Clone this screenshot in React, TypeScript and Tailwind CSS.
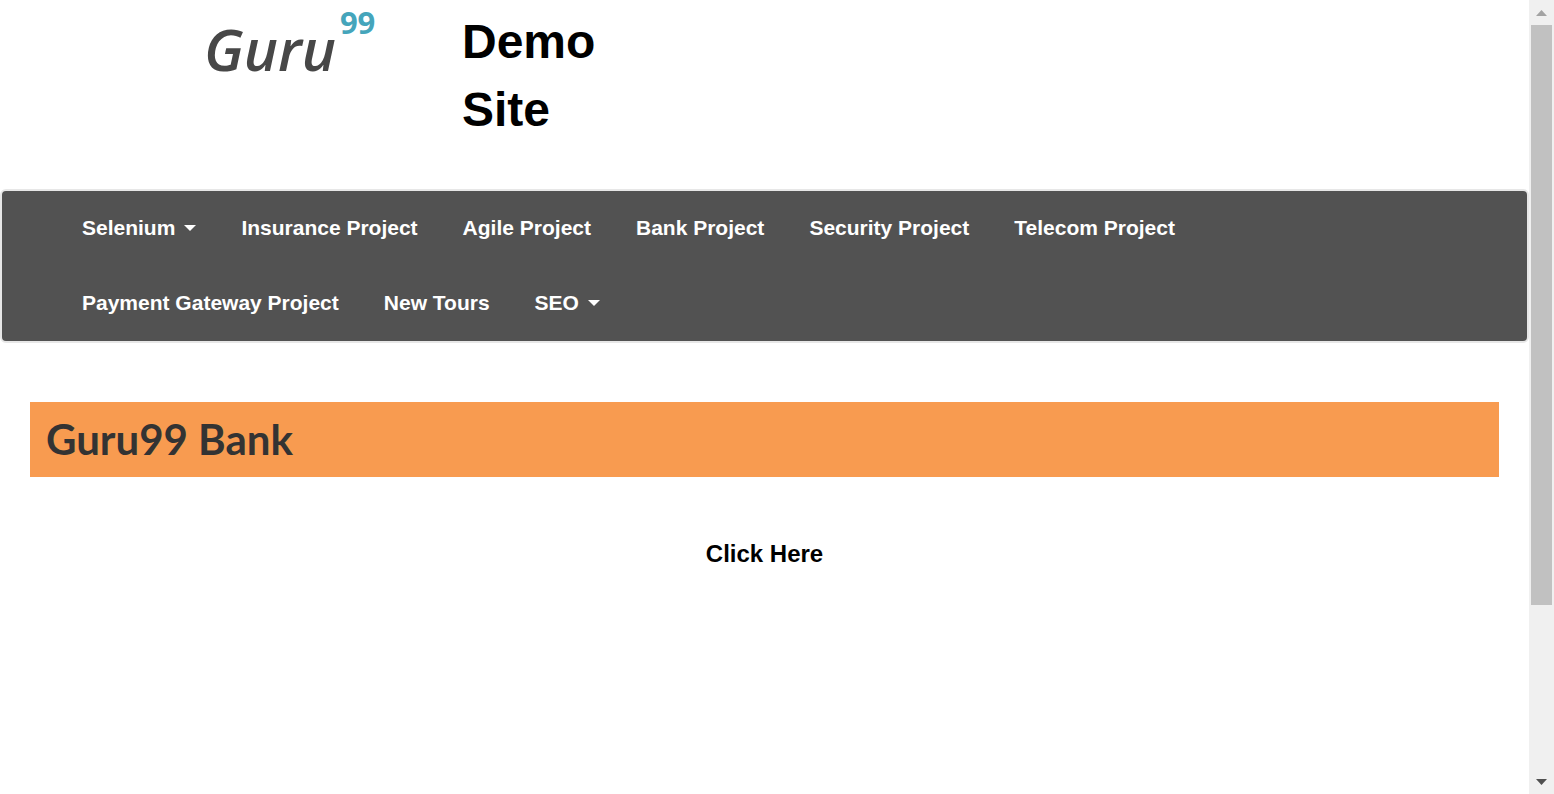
import React from "react";

const projects: { label: string; menu?: boolean }[] = [
  { label: "Selenium", menu: true },
  { label: "Insurance Project" },
  { label: "Agile Project" },
  { label: "Bank Project" },
  { label: "Security Project" },
  { label: "Telecom Project" },
  { label: "Payment Gateway Project" },
  { label: "New Tours" },
  { label: "SEO", menu: true },
];

function Caret() {
  return (
    <svg aria-hidden="true" width="12" height="6" viewBox="0 0 12 6" className="fill-white">
      <path d="M0 0H12L6 6Z" />
    </svg>
  );
}

function Logo() {
  return (
    <a href="#" className="flex w-[178px] items-start gap-1 font-['Open_Sans',sans-serif]">
      <span className="text-[58px] leading-[82px] font-semibold text-[#474747] italic">Guru</span>
      <span className="text-[31px] leading-[28px] font-bold text-[#45a5bb]">99</span>
    </a>
  );
}

function NavBar() {
  return (
    <nav className="rounded-md border-2 border-[#e7e7e7] bg-[#525252] pr-72 pl-20">
      <ul className="flex flex-wrap gap-x-[45px]">
        {projects.map(({ label, menu }) => (
          <li key={label} className="flex h-[75px] items-center pb-0.5">
            {menu ? (
              <button type="button" aria-haspopup="menu" className="flex items-center gap-[9px] text-[21px] leading-[30px] font-bold text-white">
                {label}
                <Caret />
              </button>
            ) : (
              <a href="#" className="text-[21px] leading-[30px] font-bold text-white">
                {label}
              </a>
            )}
          </li>
        ))}
      </ul>
    </nav>
  );
}

function ScrollRail() {
  return (
    <div aria-hidden="true" className="flex w-[25px] shrink-0 flex-col items-center bg-[#f0f0f0]">
      <div className="flex h-[25px] items-center">
        <svg width="11" height="6" viewBox="0 0 11 6" className="fill-[#a3a3a3]">
          <path d="M0 6L5.5 0L11 6Z" />
        </svg>
      </div>
      <div className="flex w-[21px] grow flex-col">
        <div className="h-[78%] bg-[#c1c1c1]" />
      </div>
      <div className="flex h-[25px] items-center">
        <svg width="11" height="6" viewBox="0 0 11 6" className="fill-[#505050]">
          <path d="M0 0H11L5.5 6Z" />
        </svg>
      </div>
    </div>
  );
}

export default function App() {
  return (
    <div className="flex min-h-screen bg-white font-['Liberation_Sans',Arial,sans-serif] text-black">
      <main className="min-w-0 grow">
        <header className="flex gap-20 pt-2 pb-[45px] pl-[204px]">
          <Logo />
          <h1 className="w-40 text-5xl leading-[68px] font-bold">Demo Site</h1>
        </header>
        <NavBar />
        <section className="px-[30px] pt-[59px]">
          <h2 className="bg-[#f89b50] px-4 text-[42px] leading-[75px] font-bold text-[#333333] font-['Lato',sans-serif]">
            Guru99 Bank
          </h2>
          <p className="pt-[60px] text-center text-2xl leading-[34px] font-bold">
            <a href="#">Click Here</a>
          </p>
        </section>
      </main>
      <ScrollRail />
    </div>
  );
}
